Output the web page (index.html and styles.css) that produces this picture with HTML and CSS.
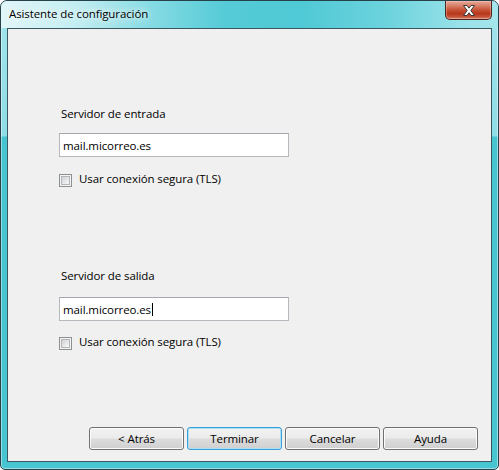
FILE: index.html
```html
<!DOCTYPE html>
<html lang="es">
<head>
<meta charset="utf-8">
<title>Asistente de configuración</title>
<link rel="stylesheet" href="styles.css">
</head>
<body>
<div class="window">
  <div class="titlebar">
    <span class="title">Asistente de configuración</span>
    <div class="close" aria-label="Cerrar">
      <svg width="14" height="11" viewBox="0 0 14 11">
        <path d="M1.5 0.5 H5 L7 3.2 L9 0.5 H12.5 L8.8 5.5 L12.5 10.5 H9 L7 7.8 L5 10.5 H1.5 L5.2 5.5 Z" fill="#fff" stroke="#3a3a3a" stroke-width="1" stroke-linejoin="round"/>
      </svg>
    </div>
  </div>
  <div class="client">
    <div class="form">
      <section class="group">
        <label class="label">Servidor de entrada</label>
        <div class="textbox">mail.micorreo.es</div>
        <div class="check-row"><span class="checkbox"><span class="checkbox-inner"></span></span><span class="check-label">Usar conexión segura (TLS)</span></div>
      </section>
      <section class="group group-second">
        <label class="label">Servidor de salida</label>
        <div class="textbox">mail.micorreo.es<span class="caret"></span></div>
        <div class="check-row"><span class="checkbox"><span class="checkbox-inner"></span></span><span class="check-label">Usar conexión segura (TLS)</span></div>
      </section>
    </div>
    <div class="buttons">
      <button class="btn">&lt; Atrás</button>
      <button class="btn btn-default">Terminar</button>
      <button class="btn">Cancelar</button>
      <button class="btn">Ayuda</button>
    </div>
  </div>
</div>
</body>
</html>
```

FILE: styles.css
```css
* { box-sizing: border-box; }
html, body {
  margin: 0;
  padding: 0;
  background: #ffffff;
}
body {
  font-family: "Open Sans", "Noto Sans", "Liberation Sans", sans-serif;
  font-size: 11.5px;
  letter-spacing: -0.1px;
  color: #000;
}
.window {
  width: 499px;
  height: 470px;
  border: 1px solid #27414b;
  border-radius: 7px 7px 5px 5px;
  padding: 0 6px 7px 6px;
  display: flex;
  flex-direction: column;
  overflow: hidden;
  background: linear-gradient(to bottom, #a3e4ec 0, #8edde6 135px, #46c4d0 136px, #47c5d1 100%);
  box-shadow: inset 0 0 0 1px rgba(255,255,255,0.45);
}
.titlebar {
  height: 27px;
  margin: 0 -6px;
  padding: 0 6px 0 7px;
  display: flex;
  align-items: flex-start;
  justify-content: space-between;
  background: linear-gradient(to right, #e2f6f8 0%, #c3eef2 15%, #86dbe3 30%, #55cbd7 45%, #4fc9d5 60%, #6dd3dd 78%, #97e1e8 92%, #a6e5ec 100%);
  border-radius: 6px 6px 0 0;
}
.title {
  margin-top: 5px;
  line-height: 16px;
  padding-left: 1px;
  text-shadow: 0 0 6px #ffffff, 0 0 10px rgba(255,255,255,0.9);
}
.close {
  width: 47px;
  height: 20px;
  margin-top: -1px;
  border: 1px solid #4a2620;
  border-top-color: #3a2a28;
  border-radius: 0 0 5px 5px;
  background: linear-gradient(to bottom, #e7a99a 0%, #d9826c 25%, #c75236 50%, #b8371c 70%, #c4543a 88%, #dc8b6f 100%);
  box-shadow: inset 0 0 0 1px rgba(255,220,210,0.35);
  display: flex;
  align-items: center;
  justify-content: center;
}
.close svg { display: block; }
.client {
  flex: 1;
  border: 1px solid #3b5862;
  background: #f0f0f0;
  display: flex;
  flex-direction: column;
}
.form {
  flex: 1;
  padding: 77px 0 0 51px;
}
.group {
  display: flex;
  flex-direction: column;
  align-items: flex-start;
}
.group-second { margin-top: 81px; }
.label {
  line-height: 16px;
  margin-left: 2px;
}
.textbox {
  margin-top: 11px;
  width: 230px;
  height: 24px;
  border: 1px solid #b5b8bd;
  border-top-color: #a5a8ae;
  background: #fff;
  padding: 0 3px;
  line-height: 21px;
  display: flex;
  align-items: center;
}
.group-second .textbox { margin-top: 13px; }
.caret {
  display: inline-block;
  width: 1px;
  height: 13px;
  background: #000;
  margin-left: 1px;
}
.check-row {
  margin-top: 14px;
  display: flex;
  align-items: flex-start;
  line-height: 16px;
}
.group-second .check-row { margin-top: 13px; }
.checkbox {
  width: 13px;
  height: 13px;
  margin-top: 3px;
  border: 1px solid #8e8f8f;
  background: #f4f4f4;
  padding: 1px;
}
.checkbox-inner {
  display: block;
  width: 9px;
  height: 9px;
  border: 1px solid #b3b5b8;
  background: linear-gradient(135deg, #d0d2d4 0%, #e6e7e8 55%, #f6f6f6 100%);
}
.check-label { margin-left: 7px; }
.buttons {
  display: flex;
  justify-content: flex-end;
  gap: 3px;
  padding: 0 13px 11px 0;
}
.btn {
  width: 95px;
  height: 23px;
  font-family: inherit;
  font-size: inherit;
  letter-spacing: inherit;
  color: #000;
  border: 1px solid #707070;
  border-radius: 3px;
  background: linear-gradient(to bottom, #f2f2f2 0%, #ebebeb 48%, #dddddd 52%, #cfcfcf 100%);
  box-shadow: inset 0 0 0 1px #fbfbfb;
  padding: 0;
  line-height: 19px;
}
.btn-default {
  border-color: #3c9fd8;
  box-shadow: inset 0 0 0 1px #a9e2f8;
}
```
